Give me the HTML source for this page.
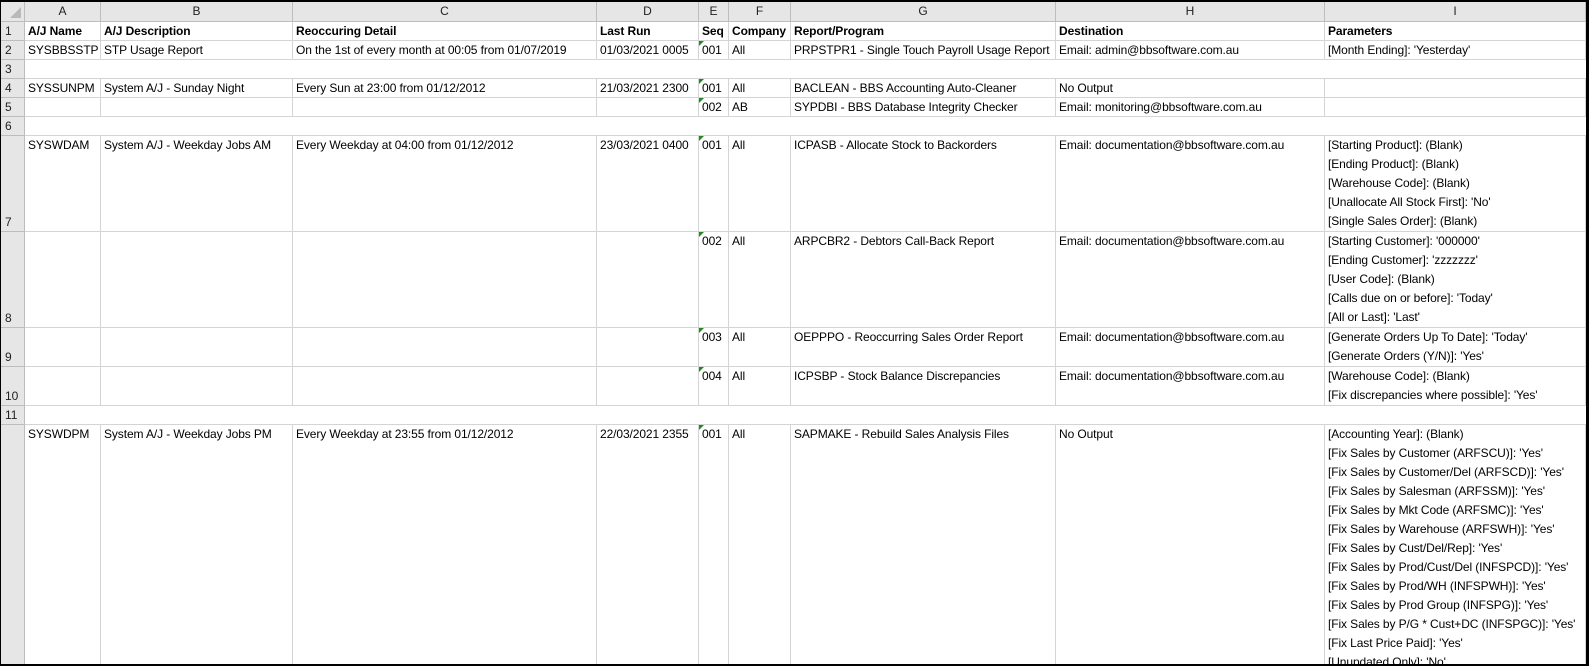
<!DOCTYPE html>
<html><head><meta charset="utf-8"><style>
*{box-sizing:border-box;margin:0;padding:0}
body{width:1589px;height:666px;background:#000;overflow:hidden;font-family:"Liberation Sans",Arial,sans-serif;font-size:12px;color:#000}
#w{position:absolute;left:1px;top:2px;width:1585px;height:662px;background:#fff;overflow:hidden}
table{table-layout:fixed;border-collapse:separate;border-spacing:0;width:1585px}
td{border-right:1px solid #d4d4d4;border-bottom:1px solid #d4d4d4;padding:1px 0 0 3px;line-height:17px;height:19px;white-space:nowrap;vertical-align:top;position:relative;overflow:visible;letter-spacing:-0.1px}
td.m{padding-top:0;line-height:19px}
td.h{background:#e6e6e6;border-color:#bdbdbd;text-align:center;padding:0;color:#222;vertical-align:middle;letter-spacing:0}
td.r{background:#e6e6e6;border-color:#bdbdbd;padding:0 0 0 4px;vertical-align:bottom;color:#222;line-height:17px;letter-spacing:0}
td.b{font-weight:bold}
td.t::before{content:"";position:absolute;left:0;top:0;border-top:5px solid #1f8a1f;border-right:5px solid transparent}
td.corner::after{content:"";position:absolute;right:3px;bottom:3px;border-bottom:11px solid #b9b9b9;border-left:11px solid transparent}
td.blank{border-right:none}
</style></head><body><div id="w"><table>
<colgroup><col style="width:24px"><col style="width:76px"><col style="width:192px"><col style="width:304px"><col style="width:102px"><col style="width:30px"><col style="width:62px"><col style="width:265px"><col style="width:269px"><col style="width:261px"></colgroup>
<tr style="height:20px"><td class="h corner" style="height:20px"></td><td class="h">A</td><td class="h">B</td><td class="h">C</td><td class="h">D</td><td class="h">E</td><td class="h">F</td><td class="h">G</td><td class="h">H</td><td class="h">I</td></tr>

<tr><td class="r">1</td><td class="b">A/J Name</td><td class="b">A/J Description</td><td class="b">Reoccuring Detail</td><td class="b">Last Run</td><td class="b">Seq</td><td class="b">Company</td><td class="b">Report/Program</td><td class="b">Destination</td><td class="b">Parameters</td></tr>

<tr><td class="r">2</td><td>SYSBBSSTP</td><td>STP Usage Report</td><td>On the 1st of every month at 00:05 from 01/07/2019</td><td>01/03/2021 0005</td><td class="t">001</td><td>All</td><td>PRPSTPR1 - Single Touch Payroll Usage Report</td><td>Email: admin@bbsoftware.com.au</td><td>[Month Ending]: 'Yesterday'</td></tr>

<tr><td class="r">3</td><td class="blank" colspan="9"></td></tr>

<tr><td class="r">4</td><td>SYSSUNPM</td><td>System A/J - Sunday Night</td><td>Every Sun at 23:00 from 01/12/2012</td><td>21/03/2021 2300</td><td class="t">001</td><td>All</td><td>BACLEAN - BBS Accounting Auto-Cleaner</td><td>No Output</td><td></td></tr>

<tr><td class="r">5</td><td></td><td></td><td></td><td></td><td class="t">002</td><td>AB</td><td>SYPDBI - BBS Database Integrity Checker</td><td>Email: monitoring@bbsoftware.com.au</td><td></td></tr>

<tr><td class="r">6</td><td class="blank" colspan="9"></td></tr>

<tr><td class="r" style="height:96px">7</td><td>SYSWDAM</td><td>System A/J - Weekday Jobs AM</td><td>Every Weekday at 04:00 from 01/12/2012</td><td>23/03/2021 0400</td><td class="t">001</td><td>All</td><td>ICPASB - Allocate Stock to Backorders</td><td>Email: documentation@bbsoftware.com.au</td><td class="m">[Starting Product]: (Blank)<br>[Ending Product]: (Blank)<br>[Warehouse Code]: (Blank)<br>[Unallocate All Stock First]: 'No'<br>[Single Sales Order]: (Blank)</td></tr>

<tr><td class="r" style="height:95px">8</td><td></td><td></td><td></td><td></td><td class="t">002</td><td>All</td><td>ARPCBR2 - Debtors Call-Back Report</td><td>Email: documentation@bbsoftware.com.au</td><td class="m">[Starting Customer]: '000000'<br>[Ending Customer]: 'zzzzzzz'<br>[User Code]: (Blank)<br>[Calls due on or before]: 'Today'<br>[All or Last]: 'Last'</td></tr>

<tr><td class="r" style="height:38px">9</td><td></td><td></td><td></td><td></td><td class="t">003</td><td>All</td><td>OEPPPO - Reoccurring Sales Order Report</td><td>Email: documentation@bbsoftware.com.au</td><td class="m">[Generate Orders Up To Date]: 'Today'<br>[Generate Orders (Y/N)]: 'Yes'</td></tr>

<tr><td class="r" style="height:38px">10</td><td></td><td></td><td></td><td></td><td class="t">004</td><td>All</td><td>ICPSBP - Stock Balance Discrepancies</td><td>Email: documentation@bbsoftware.com.au</td><td class="m">[Warehouse Code]: (Blank)<br>[Fix discrepancies where possible]: 'Yes'</td></tr>

<tr><td class="r">11</td><td class="blank" colspan="9"></td></tr>

<tr><td class="r" style="height:260px">12</td><td>SYSWDPM</td><td>System A/J - Weekday Jobs PM</td><td>Every Weekday at 23:55 from 01/12/2012</td><td>22/03/2021 2355</td><td class="t">001</td><td>All</td><td>SAPMAKE - Rebuild Sales Analysis Files</td><td>No Output</td><td class="m">[Accounting Year]: (Blank)<br>[Fix Sales by Customer (ARFSCU)]: 'Yes'<br>[Fix Sales by Customer/Del (ARFSCD)]: 'Yes'<br>[Fix Sales by Salesman (ARFSSM)]: 'Yes'<br>[Fix Sales by Mkt Code (ARFSMC)]: 'Yes'<br>[Fix Sales by Warehouse (ARFSWH)]: 'Yes'<br>[Fix Sales by Cust/Del/Rep]: 'Yes'<br>[Fix Sales by Prod/Cust/Del (INFSPCD)]: 'Yes'<br>[Fix Sales by Prod/WH (INFSPWH)]: 'Yes'<br>[Fix Sales by Prod Group (INFSPG)]: 'Yes'<br>[Fix Sales by P/G * Cust+DC (INFSPGC)]: 'Yes'<br>[Fix Last Price Paid]: 'Yes'<br>[Unupdated Only]: 'No'</td></tr>
</table></div></body></html>
